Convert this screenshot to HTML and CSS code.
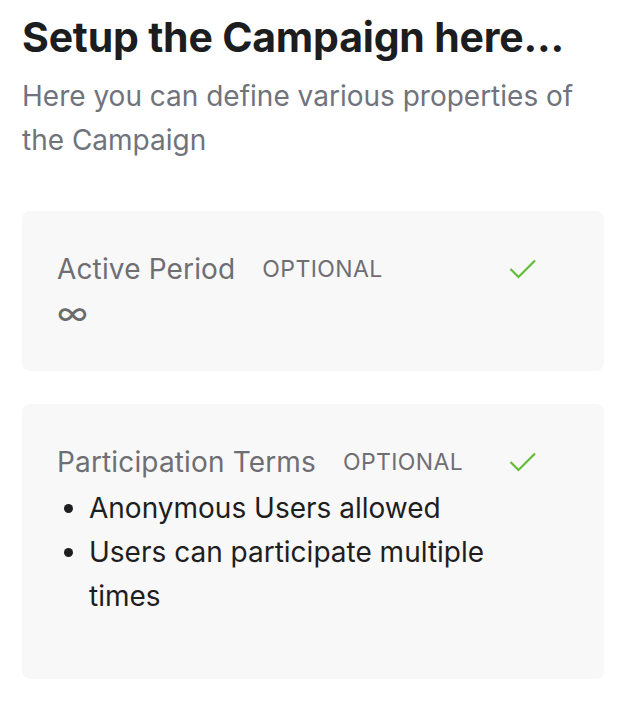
FILE: index.html
```html
<!doctype html>
<html>

<head>
	<meta charset='utf-8'>
	<title>Campaign Setup</title>

	<link rel="stylesheet" href="styles.css">
</head>

<body>
	<div class="page">
		<h1 class="title">Setup the Campaign here...</h1>
		<p class="intro">Here you can define various properties of the Campaign</p>

		<div class="card">
			<div class="card-head">
				<span class="card-name">Active Period</span>
				<span class="tag">OPTIONAL</span>
				<svg class="check" width="28" height="22" viewBox="0 0 28 22">
					<path d="M1.5 11 L9.5 19 L26 2.5" fill="none" stroke="#62bd35" stroke-width="2.2" />
				</svg>
			</div>
			<div class="infinity">&infin;</div>
		</div>

		<div class="card terms">
			<div class="card-head">
				<span class="card-name">Participation Terms</span>
				<span class="tag">OPTIONAL</span>
				<svg class="check" width="28" height="22" viewBox="0 0 28 22">
					<path d="M1.5 11 L9.5 19 L26 2.5" fill="none" stroke="#62bd35" stroke-width="2.2" />
				</svg>
			</div>
			<ul class="rules">
				<li>Anonymous Users allowed</li>
				<li>Users can participate multiple times</li>
			</ul>
		</div>
	</div>
</body>

</html>
```

FILE: styles.css
```css
* {
	font-family: Inter, "Noto Sans", sans-serif;
	box-sizing: border-box;
}

body {
	margin: 0;
	background: #fff;
}

.page {
	padding: 12px 28px 20px 22px;
	width: 632px;
}

.title {
	font-size: 41px;
	font-weight: 700;
	color: #1c1d1f;
	margin: 0;
	line-height: 50px;
	letter-spacing: -0.2px;
}

.intro {
	font-size: 28px;
	color: #70737c;
	line-height: 44px;
	margin: 12px 0 49px 0;
}

.card {
	background: #f8f8f8;
	border-radius: 8px;
	padding: 41px 67px 41px 35px;
	margin-bottom: 33px;
}

.card-head {
	display: flex;
	align-items: center;
}

.card-name {
	font-size: 28px;
	color: #6e6e73;
	line-height: 34px;
	letter-spacing: 0.15px;
}

.tag {
	font-size: 23px;
	color: #6e6e73;
	margin-left: 27px;
	letter-spacing: 0.4px;
}

.check {
	margin-left: auto;
}

.infinity {
	font-size: 33px;
	color: #6b6b6b;
	line-height: 34px;
	margin-top: 10px;
}

.terms {
	padding-bottom: 61px;
}

.rules {
	margin: 7px 0 0 0;
	padding-left: 32px;
	font-size: 28px;
	line-height: 44px;
	color: #1e1e20;
}
```
